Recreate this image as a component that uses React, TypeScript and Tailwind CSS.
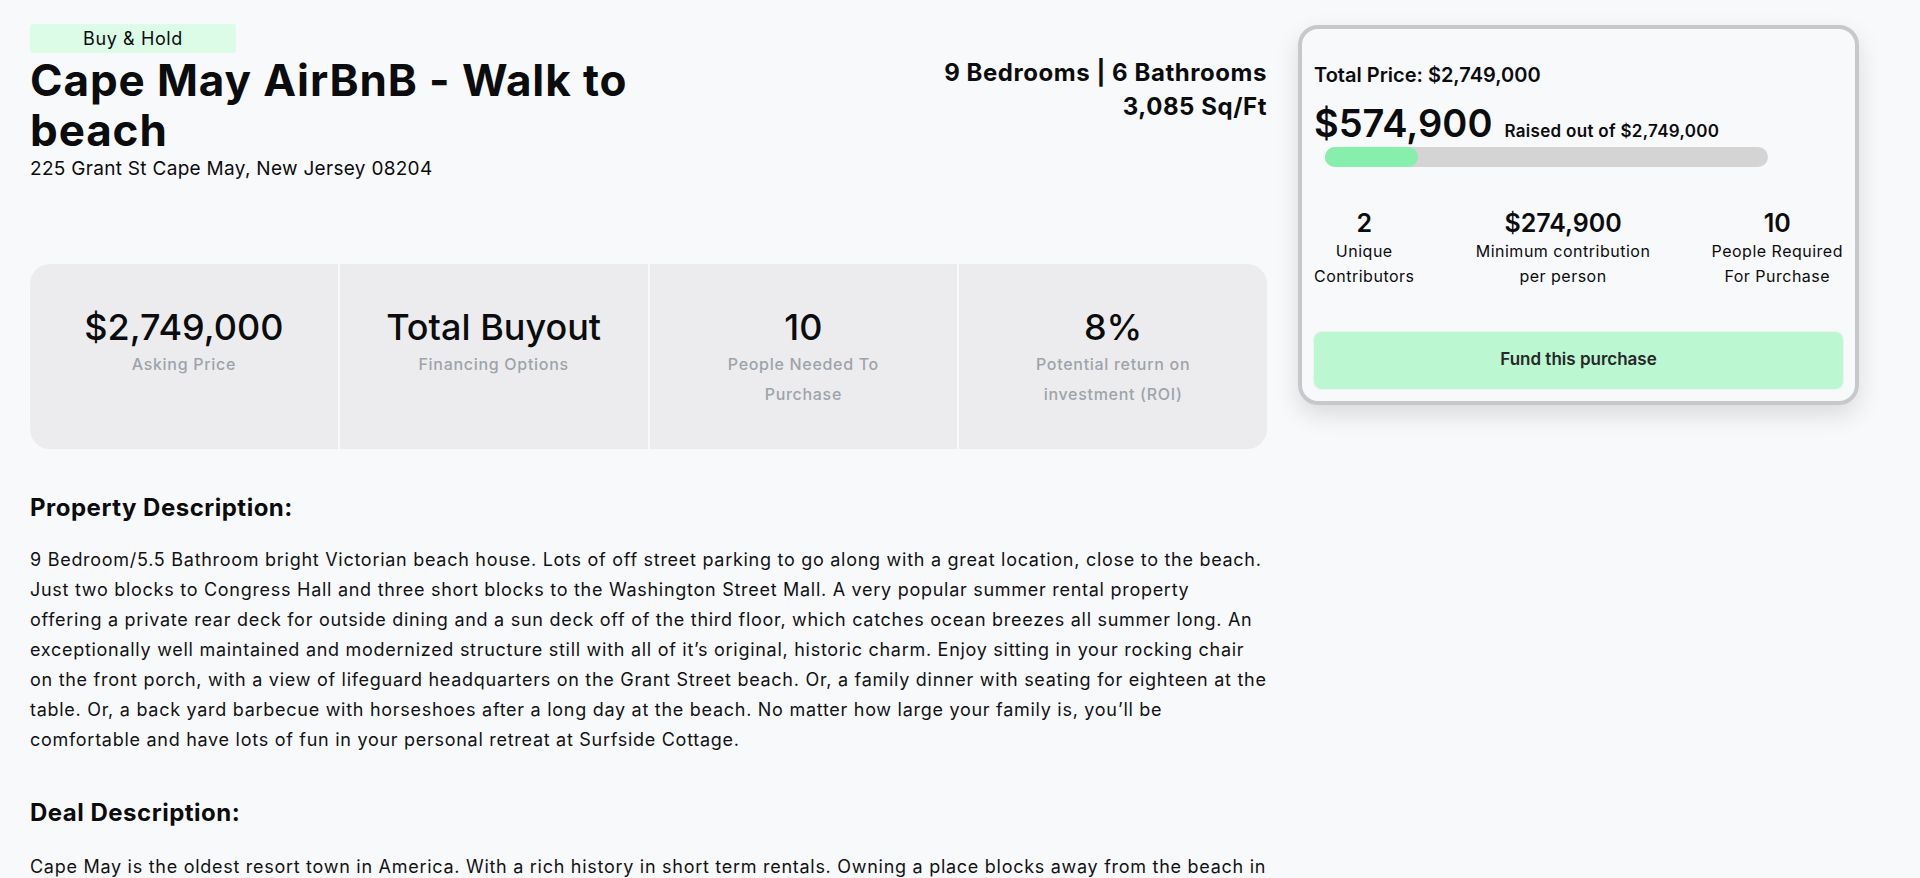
const STATS = [
  { value: '$2,749,000', label: 'Asking Price' },
  { value: 'Total Buyout', label: 'Financing Options' },
  { value: '10', label: 'People Needed To Purchase' },
  { value: '8%', label: 'Potential return on investment (ROI)' },
];

const FUND_STATS = [
  { value: '2', label: ['Unique', 'Contributors'] },
  { value: '$274,900', label: ['Minimum contribution', 'per person'] },
  { value: '10', label: ['People Required', 'For Purchase'] },
];

const PROPERTY_TEXT =
  '9 Bedroom/5.5 Bathroom bright Victorian beach house. Lots of off street parking to go along with a great location, close to the beach. Just two blocks to Congress Hall and three short blocks to the Washington Street Mall. A very popular summer rental property offering a private rear deck for outside dining and a sun deck off of the third floor, which catches ocean breezes all summer long. An exceptionally well maintained and modernized structure still with all of it\u2019s original, historic charm. Enjoy sitting in your rocking chair on the front porch, with a view of lifeguard headquarters on the Grant Street beach. Or, a family dinner with seating for eighteen at the table. Or, a back yard barbecue with horseshoes after a long day at the beach. No matter how large your family is, you\u2019ll be comfortable and have lots of fun in your personal retreat at Surfside Cottage.';

const DEAL_TEXT =
  'Cape May is the oldest resort town in America. With a rich history in short term rentals. Owning a place blocks away from the beach in';

function FundCard() {
  const raised = 574900;
  const total = 2749000;
  const pct = (raised / total) * 100;

  return (
    <div className="mt-px rounded-[20px] border-4 border-[#c6c8cc] px-3 pt-8 pb-3 shadow-[0_10px_24px_rgba(0,0,0,0.12)]">
      <div className="text-xl leading-7 font-semibold">Total Price: $2,749,000</div>
      <div className="mt-[14px] flex items-baseline gap-3">
        <span className="text-[38px] leading-10 font-semibold">$574,900</span>
        <span className="text-[17px] font-semibold tracking-[0.3px]">Raised out of $2,749,000</span>
      </div>
      <div className="mt-[2px] ml-[11px] h-5 w-[443px] rounded-full bg-[#d4d4d4]">
        <div className="h-5 rounded-full bg-[#86efac]" style={{ width: `${pct}%` }} />
      </div>

      <div className="mt-10 flex justify-between text-center">
        {FUND_STATS.map((s) => (
          <div key={s.value + s.label[0]}>
            <div className="text-[25px] leading-8 font-semibold">{s.value}</div>
            {s.label.map((l) => (
              <div key={l} className="text-base leading-[25px] tracking-[0.5px]">
                {l}
              </div>
            ))}
          </div>
        ))}
      </div>

      <button className="mt-[43px] h-[57px] w-full rounded-lg bg-[#bbf7d0] text-[17px] font-semibold text-[#27272a] shadow-[0_0_3px_rgba(0,0,0,0.08)]">
        Fund this purchase
      </button>
    </div>
  );
}

export default function App() {
  return (
    <div className="min-h-screen bg-[#f8f9fb] text-[#0b0c0d] [font-family:Inter,'Liberation_Sans',sans-serif]">
      <div className="flex gap-[31px] pt-6 pl-[30px]">
        <main className="w-[1237px] shrink-0">
          <div className="flex h-[29px] w-[206px] items-center justify-center rounded-[3px] bg-[#dcfce7] text-lg tracking-[0.6px]">
            Buy &amp; Hold
          </div>

          <div className="mt-[2px] flex items-start justify-between">
            <div className="w-[640px]">
              <h1 className="text-[44px] leading-[50px] font-bold tracking-[0.9px]">
                Cape May AirBnB - Walk to beach
              </h1>
              <p className="text-[19px] leading-7 tracking-[0.3px]">225 Grant St Cape May, New Jersey 08204</p>
            </div>
            <div className="pt-px text-right text-2xl leading-[34px] font-bold tracking-[0.55px]">
              <div>9 Bedrooms | 6 Bathrooms</div>
              <div>3,085 Sq/Ft</div>
            </div>
          </div>

          <div className="mt-[81px] grid h-[185px] grid-cols-4 gap-[2px] overflow-hidden rounded-[20px]">
            {STATS.map((s) => (
              <div key={s.label} className="flex flex-col items-center bg-[#ececee] px-12 pt-[41px] text-center">
                <div className="text-[36px] leading-[44px] font-medium whitespace-nowrap">{s.value}</div>
                <div className="text-base leading-[30px] font-medium tracking-[0.7px] text-[#9ea3aa]">{s.label}</div>
              </div>
            ))}
          </div>

          <h2 className="mt-[43px] text-2xl leading-8 font-bold tracking-[0.5px]">Property Description:</h2>
          <p className="mt-[21px] text-lg leading-[30px] tracking-[0.72px] text-[#111214]">{PROPERTY_TEXT}</p>

          <h2 className="mt-[42px] text-2xl leading-8 font-bold tracking-[0.5px]">Deal Description:</h2>
          <p className="mt-[23px] text-lg leading-[30px] tracking-[0.72px] text-[#111214]">{DEAL_TEXT}</p>
        </main>

        <aside className="w-[561px] shrink-0">
          <FundCard />
        </aside>
      </div>
    </div>
  );
}
